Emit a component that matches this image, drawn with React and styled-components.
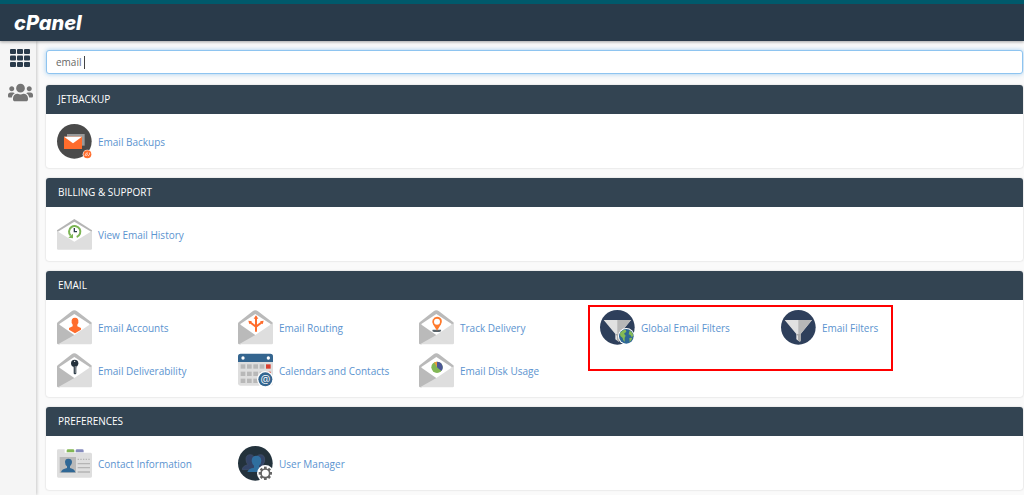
import React, { useState } from 'react';
import styled, { createGlobalStyle } from 'styled-components';
import { FaUsers } from 'react-icons/fa';

const GlobalStyle = createGlobalStyle`
	* {
		box-sizing: border-box;
	}
	body {
		margin: 0;
		background: #fafafa;
		font-family: 'Open Sans', 'Noto Sans', sans-serif;
		font-size: 10px;
		line-height: 14px;
		color: #333;
	}
`;

const Page = styled.div`
	display: flex;
	flex-direction: column;
	min-height: 100vh;
`;

const TopBar = styled.header`
	display: flex;
	align-items: center;
	height: 41px;
	padding: 0 14px;
	border-top: 4px solid #00596b;
	background: #293a4a;
	box-shadow: 0 1px 3px rgba(0, 0, 0, 0.35);
	z-index: 1;
`;

const Logo = styled.a`
	color: #fff;
	font-family: Inter, sans-serif;
	font-size: 20px;
	font-style: italic;
	font-weight: 800;
	line-height: 24px;
	text-decoration: none;
`;

const Layout = styled.div`
	display: flex;
	flex: 1;
`;

const Sidebar = styled.nav`
	display: flex;
	flex-direction: column;
	align-items: center;
	flex: none;
	gap: 13px;
	width: 36px;
	padding: 8px 0 0 4px;
	background: #f5f5f5;
	box-shadow: 1px 0 3px rgba(0, 0, 0, 0.2);
`;

const SideLink = styled.a`
	display: flex;
	color: ${(props) => (props.$active ? '#293a4a' : '#757575')};
	svg {
		display: block;
	}
`;

const Main = styled.main`
	display: flex;
	flex-direction: column;
	flex: 1;
	gap: 10px;
	min-width: 0;
	padding: 9px 1px 0 10px;
`;

const SearchBox = styled.div`
	position: relative;
	height: 25px;
`;

const SearchInput = styled.input`
	display: block;
	width: 100%;
	height: 24px;
	padding: 0 9px;
	border: 1px solid #8ec4f0;
	border-radius: 3px;
	outline: none;
	background: #fff;
	box-shadow: 0 0 5px rgba(102, 175, 233, 0.6);
	color: #666;
	font: inherit;
`;

const Caret = styled.span`
	position: absolute;
	top: 6px;
	left: 38px;
	width: 1px;
	height: 13px;
	background: #444;
`;

const Panel = styled.section`
	border-radius: 3px;
	background: #fff;
	box-shadow: 0 0 2px rgba(0, 0, 0, 0.2);
`;

const PanelTitle = styled.h2`
	height: 29px;
	margin: 0;
	padding: 0 12px;
	border-radius: 3px 3px 0 0;
	background: #334452;
	color: #fff;
	font-size: 10px;
	font-weight: 400;
	line-height: 29px;
	text-transform: uppercase;
`;

const PanelBody = styled.div`
	position: relative;
	display: grid;
	grid-template-columns: repeat(auto-fill, 181px);
	row-gap: 8px;
	padding: 10px 11px 9px;
`;

const Item = styled.a`
	display: flex;
	align-items: center;
	gap: 6px;
	height: 35px;
	color: #5b93cf;
	text-decoration: none;
	white-space: nowrap;
`;

const ItemIcon = styled.svg`
	display: block;
	flex: none;
	width: 35px;
	height: 35px;
`;

const Highlight = styled.div`
	position: absolute;
	top: 5px;
	left: 542px;
	width: 305px;
	height: 66px;
	border: 2px solid #f00;
	pointer-events: none;
`;

function Icon({ children }) {
	return <ItemIcon viewBox="0 0 105 105" aria-hidden="true">{children}</ItemIcon>;
}

function Envelope({ children }) {
	return (
		<Icon>
			<path d="M0 42Q0 38 3 36L44 4Q52 -2 60 4L102 36Q105 38 105 42V60H0Z" fill="#bababa" />
			<path d="M52 12L98 42V60L52 80L7 60V42Z" fill="#fff" />
			<path d="M0 39L55 77L8 103H4Q0 103 0 99Z" fill="#bababa" />
			<path d="M105 39V99Q105 103 101 103H3L52 75Z" fill="#dedede" />
			{children}
		</Icon>
	);
}

function FilterShape() {
	return (
		<>
			<circle cx="52" cy="52" r="52" fill="#2e3f5b" />
			<path d="M11 30H93L59 72V91Q59 96 54 94L46 88V72Z" fill="#e1e1e1" />
			<path d="M52 30H93L59 72H52Z" fill="#b7b7b7" />
			<path d="M46 72H59V91Q59 96 54 94L51 91V78Z" fill="#a8a8a8" />
		</>
	);
}

const icons = {
	backups: (
		<Icon>
			<circle cx="52" cy="52" r="52" fill="#4a4a4a" />
			<rect x="30" y="30" width="53" height="35" fill="#999" />
			<rect x="21" y="38" width="54" height="37" fill="#ff6c2c" />
			<path d="M21 38H75L48 58Z" fill="#fff" />
			<circle cx="91" cy="91" r="14" fill="#fff" />
			<circle cx="91" cy="91" r="12" fill="#ff6c2c" />
			<path d="M84 96L88 87H93M88 96L92 90M93 96Q100 92 98 86" fill="none" stroke="#fff" strokeWidth="2" />
		</Icon>
	),
	history: (
		<Icon>
			<path d="M0 40L52 6L105 40V60H0Z" fill="#b5b5b5" />
			<path d="M52 14L105 46V65H0V46Z" fill="#fff" />
			<path d="M0 42L52 74L105 42V95Q105 98 101 98H4Q0 98 0 95Z" fill="#dedede" />
			<path d="M41 56A17 17 0 1 1 59 60" fill="none" stroke="#7cb554" strokeWidth="6" />
			<path d="M34 62L48 50V64Z" fill="#7cb554" />
			<path d="M52 33V44H60" fill="none" stroke="#293a4a" strokeWidth="4" />
		</Icon>
	),
	accounts: (
		<Envelope>
			<path d="M54 23C46 23 43 28 44 35C43 38 45 40 47 44V49L36 54V59L54 70L72 59V54L61 49V44C63 40 65 38 64 35C65 28 62 23 54 23Z" fill="#ff6c2c" />
		</Envelope>
	),
	routing: (
		<Envelope>
			<path d="M54 65V20M35 36L54 50L73 36" fill="none" stroke="#ff6c2c" strokeWidth="6" />
			<path d="M54 16L61 26H47ZM31 32L42 34L34 43ZM77 32L66 34L74 43Z" fill="#ff6c2c" />
		</Envelope>
	),
	track: (
		<Envelope>
			<path d="M41 59H66Q68 64 60 66H46Q38 64 41 59Z" fill="#58636b" />
			<path d="M54 62L42 43Q38 35 41 29Q46 20 54 20Q64 20 68 29Q70 36 66 43Z" fill="#ff7a2c" />
			<circle cx="54" cy="35" r="9" fill="#fff" />
		</Envelope>
	),
	deliverability: (
		<Envelope>
			<circle cx="53" cy="31" r="11" fill="#24313c" />
			<rect x="50" y="40" width="8" height="24" rx="3" fill="#34434f" />
			<path d="M55 39V60" stroke="#aaa" strokeWidth="2" />
			<circle cx="53" cy="25" r="2" fill="#fff" />
		</Envelope>
	),
	calendar: (
		<Icon>
			<rect y="4" width="105" height="94" rx="7" fill="#dedede" />
			<path d="M0 27V10Q0 2 8 2H97Q105 2 105 10V27Z" fill="#34658f" />
			<circle cx="15" cy="15" r="5" fill="#fff" />
			<circle cx="91" cy="15" r="5" fill="#fff" />
			{[34, 56, 77].map((y) =>
				[8, 27, 46, 65, 84].map((x) => (
					<rect key={`${x}-${y}`} x={x} y={y} width="14" height="13" fill={x === 84 && y < 77 ? '#d83e2f' : '#b8b8b8'} />
				))
			)}
			<circle cx="82" cy="79" r="25" fill="#fff" />
			<circle cx="82" cy="79" r="21" fill="#34658f" />
			<text x="82" y="89" textAnchor="middle" fill="#fff" fontFamily="Open Sans" fontSize="33">@</text>
		</Icon>
	),
	disk: (
		<Envelope>
			<circle cx="54" cy="43" r="17" fill="#82b755" />
			<path d="M54 43V26A17 17 0 0 1 67 54Z" fill="#4c5796" />
			<path d="M54 43L45 28A17 17 0 0 1 54 26Z" fill="#e89b3b" />
		</Envelope>
	),
	globalFilter: (
		<Icon>
			<FilterShape />
			<circle cx="79" cy="79" r="25" fill="#fff" />
			<circle cx="79" cy="79" r="22" fill="#2f6795" />
			<path d="M60 70Q66 60 77 59L79 65L72 71L77 77L74 83V96Q68 91 68 84L61 78ZM89 61Q98 67 100 78L95 81L91 75L86 73ZM88 84L97 83Q95 91 89 96Z" fill="#85bb55" />
		</Icon>
	),
	filter: (
		<Icon>
			<FilterShape />
		</Icon>
	),
	contact: (
		<Icon>
			<path d="M0 14Q0 10 4 10H23V20H101Q105 20 105 25V91Q105 95 101 95H4Q0 95 0 91Z" fill="#dedede" />
			<path d="M29 19V14Q29 10 33 10H48Q52 10 52 14V19Z" fill="#82b755" />
			<path d="M56 19V14Q56 10 60 10H76Q80 10 80 14V19Z" fill="#858bbd" />
			<rect x="8" y="33" width="49" height="48" fill="#b9b9b9" />
			<path d="M34 38Q24 38 24 48Q24 57 30 61V66Q14 69 12 79H55Q53 69 39 66V61Q45 56 45 48Q45 38 34 38Z" fill="#2f6795" />
			<path d="M62 40H99" stroke="#b5b5b5" strokeWidth="4" strokeDasharray="4 4" />
			<path d="M62 53H99M62 65H99M62 78H99" stroke="#b5b5b5" strokeWidth="4" />
		</Icon>
	),
	users: (
		<Icon>
			<circle cx="52" cy="52" r="52" fill="#23323c" />
			<path d="M37 26Q24 26 24 40Q24 51 30 56Q13 60 13 71H91Q89 60 74 56Q81 50 80 39Q79 26 67 26Q60 26 56 32H48Q44 26 37 26Z" fill="#334467" stroke="#46536f" strokeWidth="2" />
			<path d="M55 29Q41 29 41 45Q42 54 48 59V65Q31 67 28 78H83Q80 67 63 65V59Q70 53 70 44Q69 29 55 29Z" fill="#2f6f9f" />
			<circle cx="82" cy="82" r="25" fill="#fff" />
			<circle cx="82" cy="82" r="13" fill="none" stroke="#666" strokeWidth="5" />
			{[0, 45, 90, 135, 180, 225, 270, 315].map((angle) => (
				<rect key={angle} x="78" y="62" width="8" height="8" fill="#666" transform={`rotate(${angle} 82 82)`} />
			))}
		</Icon>
	),
};

const groups = [
	{ title: 'JetBackup', items: [{ label: 'Email Backups', icon: 'backups' }] },
	{ title: 'Billing & Support', items: [{ label: 'View Email History', icon: 'history' }] },
	{
		title: 'Email',
		highlight: true,
		items: [
			{ label: 'Email Accounts', icon: 'accounts' },
			{ label: 'Email Routing', icon: 'routing' },
			{ label: 'Track Delivery', icon: 'track' },
			{ label: 'Global Email Filters', icon: 'globalFilter' },
			{ label: 'Email Filters', icon: 'filter' },
			{ label: 'Email Deliverability', icon: 'deliverability' },
			{ label: 'Calendars and Contacts', icon: 'calendar' },
			{ label: 'Email Disk Usage', icon: 'disk' },
		],
	},
	{
		title: 'Preferences',
		items: [
			{ label: 'Contact Information', icon: 'contact' },
			{ label: 'User Manager', icon: 'users' },
		],
	},
];

export default function App() {
	const [query, setQuery] = useState('email ');

	return (
		<Page>
			<GlobalStyle />
			<TopBar>
				<Logo href="#home">cPanel</Logo>
			</TopBar>
			<Layout>
				<Sidebar aria-label="Main">
					<SideLink href="#tools" aria-label="Tools" $active>
						<svg width="20" height="18" viewBox="0 0 20 18" fill="currentColor">
							{[0, 6.5, 13].map((y) =>
								[0, 7, 14].map((x) => <rect key={`${x}-${y}`} x={x} y={y} width="6" height="5" rx="1" />)
							)}
						</svg>
					</SideLink>
					<SideLink href="#users" aria-label="User Manager">
						<FaUsers size={25} />
					</SideLink>
				</Sidebar>
				<Main>
					<SearchBox>
						<SearchInput type="text" aria-label="Find functions" value={query} onChange={(e) => setQuery(e.target.value)} />
						{/* caret after the initial search term */}
						{query === 'email ' && <Caret />}
					</SearchBox>
					{groups.map((group) => (
						<Panel key={group.title}>
							<PanelTitle>{group.title}</PanelTitle>
							<PanelBody>
								{group.items.map((item) => (
									<Item key={item.label} href={`#${item.icon}`}>
										{icons[item.icon]}
										{item.label}
									</Item>
								))}
								{group.highlight && <Highlight />}
							</PanelBody>
						</Panel>
					))}
				</Main>
			</Layout>
		</Page>
	);
}
